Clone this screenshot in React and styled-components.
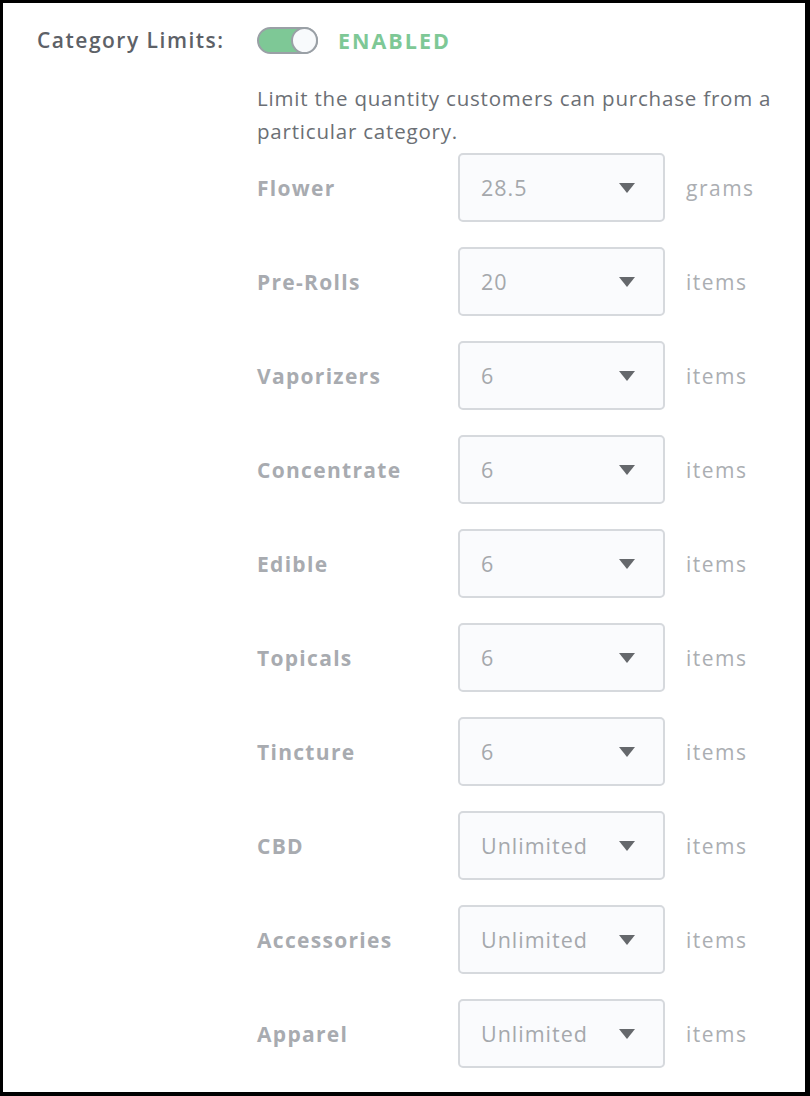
import React from "react";
import styled, { createGlobalStyle } from "styled-components";

const Global = createGlobalStyle`
  html, body { margin: 0; padding: 0; background: #fff; }
  body { font-family: "Open Sans", "Lato", sans-serif; }
`;

const Frame = styled.div`
  box-sizing: border-box;
  width: 810px;
  height: 1096px;
  border-style: solid;
  border-color: #000;
  border-width: 3px 5px 4px 3px;
  background: #fff;
  display: grid;
  grid-template-columns: 220px 1fr;
  align-items: start;
  padding: 23px 0 0 34px;
`;

const SideLabel = styled.div`
  font-size: 21px;
  font-weight: 600;
  color: #5d6167;
  line-height: 28px;
  letter-spacing: 1.5px;
`;

const Content = styled.div`
  display: flex;
  flex-direction: column;
`;

const ToggleRow = styled.div`
  display: flex;
  align-items: center;
  gap: 20px;
  height: 28px;
`;

const Toggle = styled.div`
  box-sizing: border-box;
  width: 61px;
  height: 27px;
  border-radius: 14px;
  border: 2px solid #9aa0a6;
  background: #7ec896;
  display: flex;
  justify-content: flex-end;
  align-items: center;
`;

const Knob = styled.div`
  box-sizing: border-box;
  width: 27px;
  height: 27px;
  margin-right: -2px;
  border-radius: 50%;
  border: 2px solid #9aa0a6;
  background: #f8fafc;
`;

const Status = styled.span`
  font-size: 21.5px;
  font-weight: 700;
  color: #7ec896;
  letter-spacing: 2px;
`;

const Description = styled.p`
  margin: 28px 0 5px;
  font-size: 20.5px;
  line-height: 33px;
  color: #6b6f75;
  letter-spacing: 0.8px;
  max-width: 530px;
`;

const List = styled.div`
  display: flex;
  flex-direction: column;
  gap: 25px;
`;

const Row = styled.div`
  display: grid;
  grid-template-columns: 180px 207px auto;
  align-items: center;
  column-gap: 21px;
`;

const CatLabel = styled.span`
  font-size: 21px;
  font-weight: 700;
  color: #a8abb0;
  letter-spacing: 1.3px;
`;

const Select = styled.div`
  box-sizing: border-box;
  height: 69px;
  border: 2px solid #d6d9dd;
  border-radius: 5px;
  background: #fafbfd;
  display: flex;
  align-items: center;
  justify-content: space-between;
  padding: 0 28px 0 21px;
  font-size: 21.5px;
  color: #a5a8ac;
  letter-spacing: 1px;
`;

const Unit = styled.span`
  font-size: 21px;
  color: #abaeb2;
  letter-spacing: 1.5px;
`;

const Caret = () => (
  <svg width="16" height="10" viewBox="0 0 16 10">
    <path d="M0 0 H16 L8 10 Z" fill="#65686c" />
  </svg>
);

const rows = [
  ["Flower", "28.5", "grams"],
  ["Pre-Rolls", "20", "items"],
  ["Vaporizers", "6", "items"],
  ["Concentrate", "6", "items"],
  ["Edible", "6", "items"],
  ["Topicals", "6", "items"],
  ["Tincture", "6", "items"],
  ["CBD", "Unlimited", "items"],
  ["Accessories", "Unlimited", "items"],
  ["Apparel", "Unlimited", "items"],
];

export default function App() {
  return (
    <>
      <Global />
      <Frame>
        <SideLabel>Category Limits:</SideLabel>
        <Content>
          <ToggleRow>
            <Toggle>
              <Knob />
            </Toggle>
            <Status>ENABLED</Status>
          </ToggleRow>
          <Description>
            Limit the quantity customers can purchase from a particular category.
          </Description>
          <List>
            {rows.map(([name, value, unit]) => (
              <Row key={name}>
                <CatLabel>{name}</CatLabel>
                <Select>
                  <span>{value}</span>
                  <Caret />
                </Select>
                <Unit>{unit}</Unit>
              </Row>
            ))}
          </List>
        </Content>
      </Frame>
    </>
  );
}
